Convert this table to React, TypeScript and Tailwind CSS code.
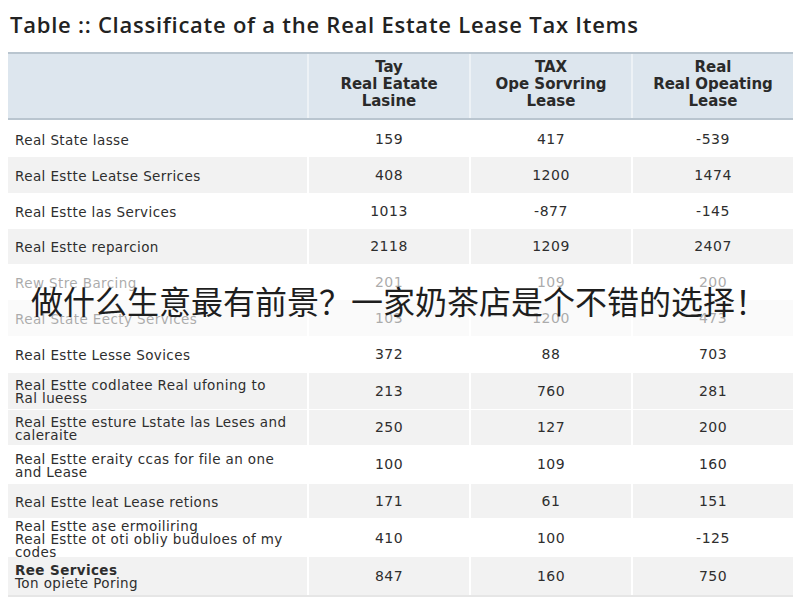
import React from "react";

type Row = {
  label: React.ReactNode;
  values: [string, string, string];
  shade: boolean;
  h: string;
  faded?: boolean;
  gapTop?: boolean;
};

const ROWS: Row[] = [
  { label: "Real State lasse", values: ["159", "417", "-539"], shade: false, h: "h-[36px]" },
  { label: "Real Estte Leatse Serrices", values: ["408", "1200", "1474"], shade: true, h: "h-[36px]" },
  { label: "Real Estte las Services", values: ["1013", "-877", "-145"], shade: false, h: "h-[36px]" },
  { label: "Real Estte reparcion", values: ["2118", "1209", "2407"], shade: true, h: "h-[35px]" },
  { label: "Rew Stre Barcing", values: ["201", "109", "200"], shade: false, h: "h-[36px]", faded: true },
  { label: "Real State Eecty Services", values: ["103", "1200", "473"], shade: true, h: "h-[36px]", faded: true },
  { label: "Real Estte Lesse Sovices", values: ["372", "88", "703"], shade: false, h: "h-[37px]" },
  {
    label: (
      <>
        Real Estte codlatee Real ufoning to
        <br />
        Ral lueess
      </>
    ),
    values: ["213", "760", "281"],
    shade: true,
    h: "h-[36px]",
  },
  {
    label: (
      <>
        Real Estte esture Lstate las Leses and
        <br />
        caleraite
      </>
    ),
    values: ["250", "127", "200"],
    shade: true,
    h: "h-[36px]",
    gapTop: true,
  },
  {
    label: (
      <>
        Real Estte eraity ccas for file an one
        <br />
        and Lease
      </>
    ),
    values: ["100", "109", "160"],
    shade: false,
    h: "h-[39px]",
  },
  { label: "Real Estte leat Lease retions", values: ["171", "61", "151"], shade: true, h: "h-[34px]" },
  {
    label: (
      <>
        Real Estte ase ermoiliring
        <br />
        Real Estte ot oti obliy buduloes of my
        <br />
        codes
      </>
    ),
    values: ["410", "100", "-125"],
    shade: false,
    h: "h-[38px]",
  },
  {
    label: (
      <>
        <span className="font-bold">Ree Services</span>
        <br />
        Ton opiete Poring
      </>
    ),
    values: ["847", "160", "750"],
    shade: true,
    h: "h-[39px]",
    gapTop: true,
  },
];

export default function App() {
  return (
    <div className="relative h-[600px] w-[800px] overflow-hidden bg-white font-['DejaVu_Sans',sans-serif] text-[#2e2e2e]">
      <h1 className="h-[52px] pl-[10px] pt-[8px] font-['Open_Sans',sans-serif] text-[22px] font-semibold leading-[32px] tracking-[0.75px] text-[#222]">
        Table :: Classificate of a the Real Estate Lease Tax Items
      </h1>

      <div className="mx-[8px] w-[785px]">
        {/* header */}
        <div className="grid h-[68px] grid-cols-[299px_160px_160px_160px] gap-x-[2px] border-y-2 border-[#b9c5cf] bg-[#edf2f6]">
          <div className="bg-[#dde6ee]" />
          <HeadCell lines={["Tay", "Real Eatate", "Lasine"]} />
          <HeadCell lines={["TAX", "Ope Sorvring", "Lease"]} />
          <HeadCell lines={["Real", "Real Opeating", "Lease"]} />
        </div>

        <div className="mt-px">
          {ROWS.map((r, i) => (
            <TableRow key={i} row={r} />
          ))}
        </div>
        <div className="h-[2px] bg-[#e6e6e6]" />
      </div>

      {/* caption over the table */}
      <div className="absolute left-0 top-[264px] flex h-[72px] w-[800px] items-center bg-white/60 pl-[31px]">
        <p className="font-['Noto_Sans_CJK_SC',sans-serif] text-[32px] leading-[40px] text-[#1e1e1e]">
          做什么生意最有前景？一家奶茶店是个不错的选择！
        </p>
      </div>
    </div>
  );
}

function HeadCell({ lines }: { lines: string[] }) {
  return (
    <div className="flex flex-col items-center justify-center bg-[#dde6ee] pb-[4px] text-[15px] font-bold leading-[17px] text-[#2a2a2a]">
      {lines.map((l) => (
        <span key={l}>{l}</span>
      ))}
    </div>
  );
}

function TableRow({ row }: { row: Row }) {
  const cell = row.shade ? "bg-[#f2f2f2]" : "bg-white";
  return (
    <div
      className={`grid grid-cols-[299px_160px_160px_160px] gap-x-[2px] bg-white ${row.h} ${
        row.gapTop ? "border-t border-white" : ""
      }`}
    >
      <div
        className={`flex items-center px-[7px] pt-[2px] text-[13.5px] leading-[13px] tracking-[0.4px] ${cell}`}
      >
        <span>{row.label}</span>
      </div>
      {row.values.map((v, j) => (
        <div
          key={j}
          className={`flex items-center justify-center text-[14px] tracking-[0.5px] ${cell}`}
        >
          {v}
        </div>
      ))}
    </div>
  );
}
